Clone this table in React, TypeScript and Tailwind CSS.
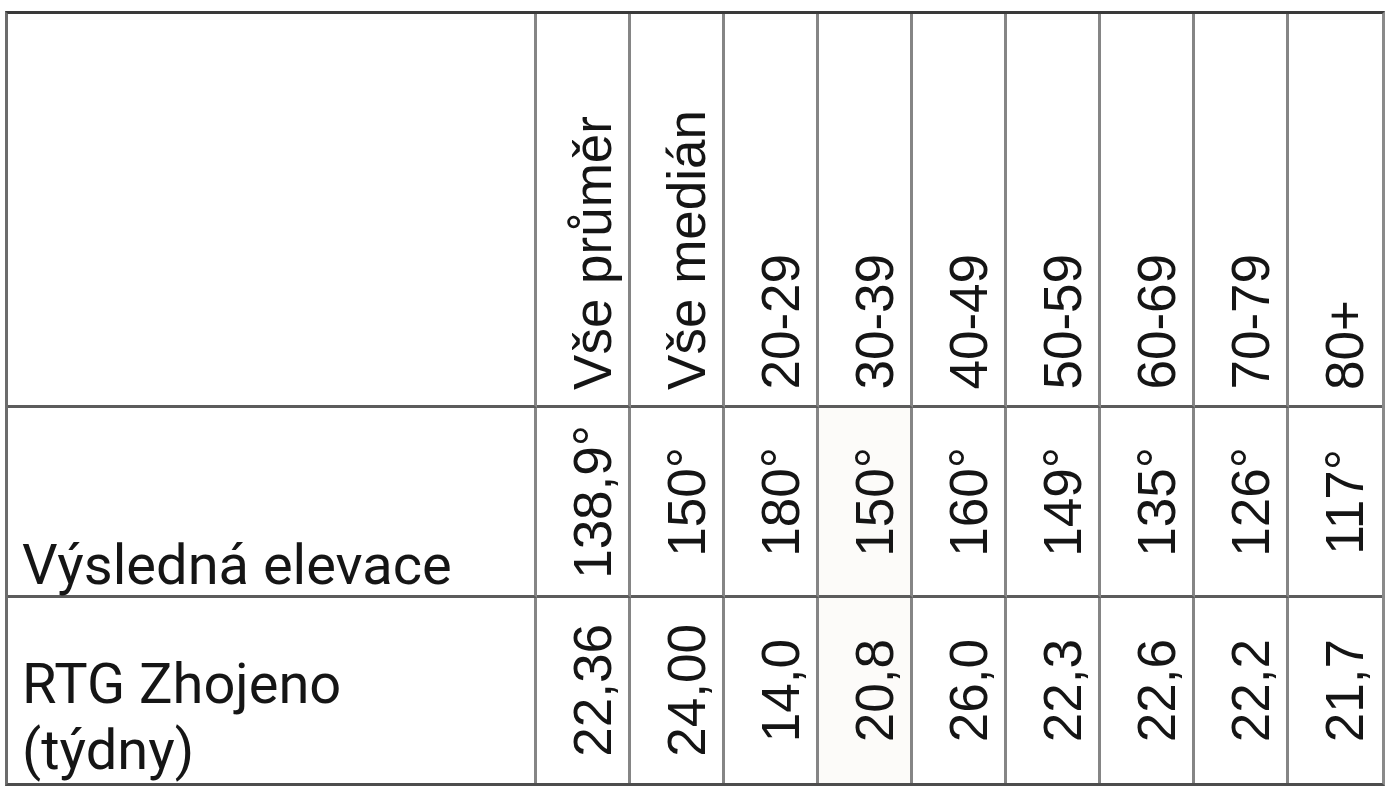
const headers = ["Vše průměr", "Vše medián", "20-29", "30-39", "40-49", "50-59", "60-69", "70-79", "80+"];
const elevace = ["138,9°", "150°", "180°", "150°", "160°", "149°", "135°", "126°", "117°"];
const rtg = ["22,36", "24,00", "14,0", "20,8", "26,0", "22,3", "22,6", "22,2", "21,7"];

function Vertical({ text }: { text: string }) {
  return (
    <span className="[writing-mode:vertical-rl] rotate-180 whitespace-nowrap text-[53px] leading-none text-[#151515] font-['Liberation_Sans',Arial,sans-serif]">
      {text}
    </span>
  );
}

export default function App() {
  return (
    <div className="min-h-screen bg-white pt-[11px] pl-[5px]">
      <div className="w-fit border-t-[3px] border-t-[#3a3a3a] border-l-[3px] border-l-[#6c6c6c] border-r-[3px] border-r-[#8a8a8a] border-b-[3px] border-b-[#4d4d4d]">
        <div className="grid grid-cols-[529px_repeat(8,94px)_93px] grid-rows-[394px_190px_185px]">
          {/* header row */}
          <div className="border-r-[3px] border-r-[#858585] border-b-[3px] border-b-[#5c5c5c]" />
          {headers.map((h, i) => (
            <div
              key={h}
              className={
                i === headers.length - 1
                  ? "flex items-end pl-[29px] pb-[15px] border-b-[3px] border-b-[#5c5c5c]"
                  : "flex items-end pl-[29px] pb-[15px] border-r-[3px] border-r-[#858585] border-b-[3px] border-b-[#5c5c5c]"
              }
            >
              <Vertical text={h} />
            </div>
          ))}

          {/* elevace */}
          <div className="flex items-end pl-[14px] border-r-[3px] border-r-[#858585] border-b-[3px] border-b-[#5c5c5c]">
            <span className="text-[56px] leading-[60px] text-[#151515] font-['Roboto',Arial,sans-serif]">
              Výsledná elevace
            </span>
          </div>
          {elevace.map((v, i) => (
            <div
              key={`e-${i}`}
              className={
                i === 3
                  ? "flex items-center pl-[29px] bg-[#fcfbf9] border-r-[3px] border-r-[#858585] border-b-[3px] border-b-[#5c5c5c]"
                  : i === elevace.length - 1
                    ? "flex items-center pl-[29px] border-b-[3px] border-b-[#5c5c5c]"
                    : "flex items-center pl-[29px] border-r-[3px] border-r-[#858585] border-b-[3px] border-b-[#5c5c5c]"
              }
            >
              <Vertical text={v} />
            </div>
          ))}

          {/* rtg */}
          <div className="flex items-end pl-[14px] border-r-[3px] border-r-[#858585]">
            <span className="text-[56px] leading-[66px] text-[#151515] font-['Roboto',Arial,sans-serif]">
              RTG Zhojeno
              <br />
              (týdny)
            </span>
          </div>
          {rtg.map((v, i) => (
            <div
              key={`r-${i}`}
              className={
                i === 3
                  ? "flex items-center pl-[29px] bg-[#fcfbf9] border-r-[3px] border-r-[#858585]"
                  : i === rtg.length - 1
                    ? "flex items-center pl-[29px]"
                    : "flex items-center pl-[29px] border-r-[3px] border-r-[#858585]"
              }
            >
              <Vertical text={v} />
            </div>
          ))}
        </div>
      </div>
    </div>
  );
}
